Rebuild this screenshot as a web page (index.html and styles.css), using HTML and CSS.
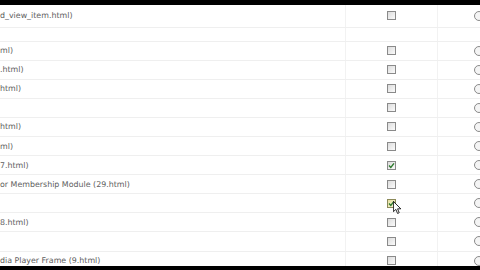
FILE: index.html
```html
<!DOCTYPE html>
<html>
<head>
<meta charset="utf-8">
<link rel="stylesheet" href="styles.css">
</head>
<body>
<div class="screen">
  <div class="bar"></div>
  <div class="list">
    <div class="row first"><div class="name">d_view_item.html)</div><div class="chk"><span class="box"></span></div><div class="rad"><span class="radio"></span></div></div>
    <div class="row gap"><div class="name"></div><div class="chk"></div><div class="rad"></div></div>
    <div class="row"><div class="name">ml)</div><div class="chk"><span class="box"></span></div><div class="rad"><span class="radio"></span></div></div>
    <div class="row"><div class="name">.html)</div><div class="chk"><span class="box"></span></div><div class="rad"><span class="radio"></span></div></div>
    <div class="row"><div class="name">html)</div><div class="chk"><span class="box"></span></div><div class="rad"><span class="radio"></span></div></div>
    <div class="row"><div class="name"></div><div class="chk"><span class="box"></span></div><div class="rad"><span class="radio"></span></div></div>
    <div class="row"><div class="name">html)</div><div class="chk"><span class="box"></span></div><div class="rad"><span class="radio"></span></div></div>
    <div class="row"><div class="name">ml)</div><div class="chk"><span class="box"></span></div><div class="rad"><span class="radio"></span></div></div>
    <div class="row"><div class="name">7.html)</div><div class="chk"><span class="box checked"><svg viewBox="0 0 9 9" width="9" height="9"><path d="M2 4.5 L3.8 6.4 L7 2.4" fill="none" stroke="#2d7a2d" stroke-width="1.4"/></svg></span></div><div class="rad"><span class="radio"></span></div></div>
    <div class="row"><div class="name">or Membership Module (29.html)</div><div class="chk"><span class="box"></span></div><div class="rad"><span class="radio"></span></div></div>
    <div class="row"><div class="name"></div><div class="chk"><span class="box checked hover"><svg viewBox="0 0 9 9" width="9" height="9"><path d="M2 4.5 L3.8 6.4 L7 2.4" fill="none" stroke="#2d7a2d" stroke-width="1.4"/></svg></span><svg class="cursor" viewBox="0 0 11 17" width="9" height="14"><path d="M0.5 0.5 L0.5 13 L3.5 10.2 L5.6 15.2 L7.6 14.3 L5.6 9.5 L9.6 9.5 Z" fill="#fff" stroke="#000" stroke-width="1"/></svg></div><div class="rad"><span class="radio"></span></div></div>
    <div class="row"><div class="name">8.html)</div><div class="chk"><span class="box"></span></div><div class="rad"><span class="radio"></span></div></div>
    <div class="row"><div class="name"></div><div class="chk"><span class="box"></span></div><div class="rad"><span class="radio"></span></div></div>
    <div class="row"><div class="name">dia Player Frame (9.html)</div><div class="chk"><span class="box"></span></div><div class="rad"><span class="radio"></span></div></div>
  </div>
  <div class="bar bottom"></div>
</div>
</body>
</html>
```
FILE: styles.css
```css
html, body {
  margin: 0;
  padding: 0;
  background: #fff;
}
.screen {
  width: 480px;
  height: 270px;
  overflow: hidden;
  position: relative;
  font-family: "DejaVu Sans", Verdana, sans-serif;
  font-size: 7.9px;
  color: #5e5e5e;
}
.bar {
  height: 5px;
  background: #000;
}
.bar.bottom {
  position: absolute;
  left: 0;
  right: 0;
  bottom: 0;
  height: 4px;
}
.list {
  display: flex;
  flex-direction: column;
}
.row {
  display: grid;
  grid-template-columns: 345px 92px 82px;
  height: 19.1px;
  box-sizing: border-box;
  border-bottom: 1px solid #efefef;
  flex: none;
}
.row.first {
  height: 22.5px;
}
.row.gap {
  height: 14px;
}
.name {
  display: flex;
  align-items: center;
  white-space: nowrap;
  overflow: hidden;
}
.chk, .rad {
  display: flex;
  align-items: center;
  justify-content: center;
  border-left: 1px solid #f2f2f2;
  position: relative;
}
.box {
  width: 9px;
  height: 9px;
  box-sizing: border-box;
  border: 1px solid #8a8a8a;
  background: linear-gradient(135deg, #dcdcdc, #fbfbfb);
  display: block;
  position: relative;
}
.box svg {
  position: absolute;
  left: -1px;
  top: -1px;
}
.box.hover {
  background: linear-gradient(135deg, #e6e0a0, #fbf6d8);
  border-color: #8c8a5a;
}
.cursor {
  position: absolute;
  left: 47px;
  top: 7px;
}
.radio {
  width: 10px;
  height: 10px;
  box-sizing: border-box;
  border: 1px solid #8a8a8a;
  border-radius: 50%;
  background: #f4f4f4;
  display: block;
}
```
